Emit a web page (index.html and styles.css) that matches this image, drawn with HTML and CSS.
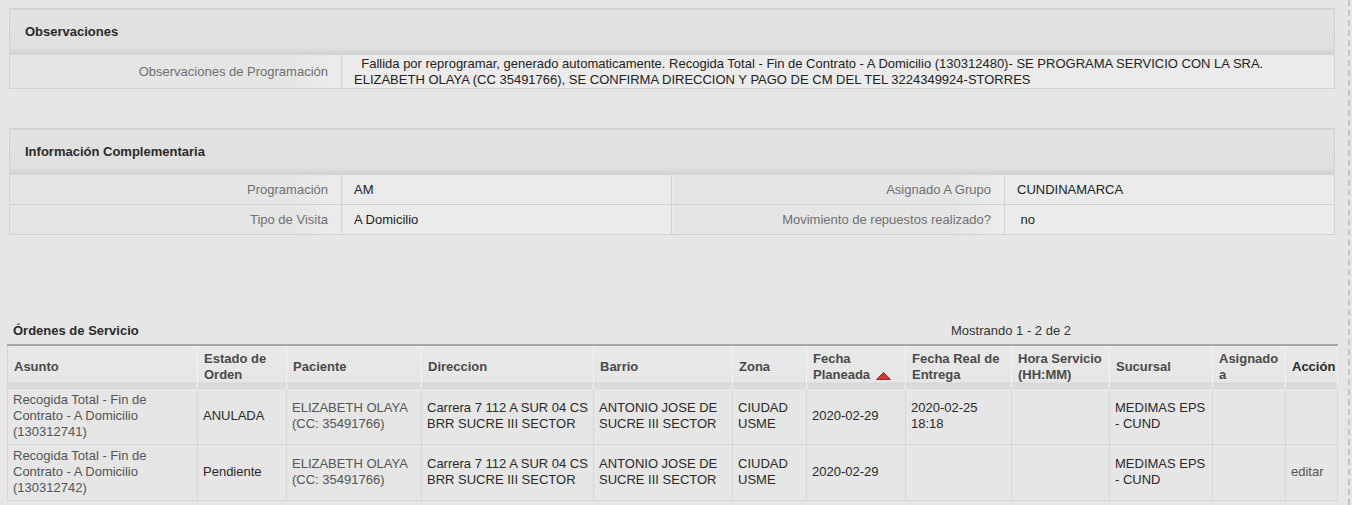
FILE: index.html
```html
<!DOCTYPE html>
<html>

<head>
  <meta charset="utf-8">
  <title>Detalle de Programación</title>
  <link rel="stylesheet" href="styles.css">
</head>

<body>
  <div class="page">

    <!-- Observaciones -->
    <table class="panel panel-obs">
      <colgroup>
        <col style="width: 332px">
        <col>
      </colgroup>
      <tr>
        <th class="panel-title" colspan="2">Observaciones</th>
      </tr>
      <tr>
        <td class="label">Observaciones de Programación</td>
        <td class="value">&nbsp;&nbsp;Fallida por reprogramar, generado automaticamente. Recogida Total - Fin de Contrato - A Domicilio (130312480)- SE PROGRAMA SERVICIO CON LA SRA. ELIZABETH OLAYA (CC 35491766), SE CONFIRMA DIRECCION Y PAGO DE CM DEL TEL 3224349924-STORRES</td>
      </tr>
    </table>

    <!-- Informacion complementaria -->
    <table class="panel panel-info">
      <colgroup>
        <col style="width: 332px">
        <col style="width: 330px">
        <col style="width: 333px">
        <col>
      </colgroup>
      <tr>
        <th class="panel-title" colspan="4">Información Complementaria</th>
      </tr>
      <tr>
        <td class="label">Programación</td>
        <td class="value">AM</td>
        <td class="label">Asignado A Grupo</td>
        <td class="value">CUNDINAMARCA</td>
      </tr>
      <tr>
        <td class="label">Tipo de Visita</td>
        <td class="value">A Domicilio</td>
        <td class="label">Movimiento de repuestos realizado?</td>
        <td class="value">&nbsp;no</td>
      </tr>
    </table>

    <!-- Ordenes de servicio -->
    <div class="list-head">
      <span class="list-title">Órdenes de Servicio</span>
      <span class="list-count">Mostrando 1 - 2 de 2</span>
    </div>
    <table class="grid">
      <colgroup>
        <col style="width: 190px">
        <col style="width: 89px">
        <col style="width: 135px">
        <col style="width: 172px">
        <col style="width: 139px">
        <col style="width: 74px">
        <col style="width: 99px">
        <col style="width: 106px">
        <col style="width: 98px">
        <col style="width: 103px">
        <col style="width: 73px">
        <col style="width: 52px">
      </colgroup>
      <thead>
        <tr>
          <th>Asunto</th>
          <th>Estado de Orden</th>
          <th>Paciente</th>
          <th>Direccion</th>
          <th>Barrio</th>
          <th>Zona</th>
          <th>Fecha Planeada <svg class="sort" width="15" height="8" viewBox="0 0 15 8"><polygon points="7.5,0.5 14.5,7.5 0.5,7.5" fill="#d23a3a" stroke="#9e2a2a" stroke-width="1"/></svg></th>
          <th>Fecha Real de Entrega</th>
          <th>Hora Servicio (HH:MM)</th>
          <th>Sucursal</th>
          <th>Asignado a</th>
          <th class="dark">Acción</th>
        </tr>
      </thead>
      <tbody>
        <tr>
          <td><a href="#">Recogida Total - Fin de Contrato - A Domicilio (130312741)</a></td>
          <td>ANULADA</td>
          <td><a href="#">ELIZABETH OLAYA (CC: 35491766)</a></td>
          <td>Carrera 7 112 A SUR 04 CS BRR SUCRE III SECTOR</td>
          <td>ANTONIO JOSE DE SUCRE III SECTOR</td>
          <td>CIUDAD USME</td>
          <td>2020-02-29</td>
          <td>2020-02-25 18:18</td>
          <td></td>
          <td>MEDIMAS EPS - CUND</td>
          <td></td>
          <td></td>
        </tr>
        <tr>
          <td><a href="#">Recogida Total - Fin de Contrato - A Domicilio (130312742)</a></td>
          <td>Pendiente</td>
          <td><a href="#">ELIZABETH OLAYA (CC: 35491766)</a></td>
          <td>Carrera 7 112 A SUR 04 CS BRR SUCRE III SECTOR</td>
          <td>ANTONIO JOSE DE SUCRE III SECTOR</td>
          <td>CIUDAD USME</td>
          <td>2020-02-29</td>
          <td></td>
          <td></td>
          <td>MEDIMAS EPS - CUND</td>
          <td></td>
          <td><a href="#">editar</a></td>
        </tr>
      </tbody>
    </table>

  </div>
</body>

</html>
```

FILE: styles.css
```css
html,
body {
  margin: 0;
  padding: 0;
  background-color: #e6e6e6;
}

body {
  font-family: 'Liberation Sans', Arial, sans-serif;
  font-size: 13px;
  line-height: 16px;
  color: #222;
}

.page {
  width: 1350px;
  min-height: 505px;
  box-sizing: border-box;
  padding-top: 8px;
  border-right: 2px dashed #c4c4c4;
}

/* Panels with the grey title bar */
.panel {
  width: 1326px;
  margin-left: 9px;
  border-collapse: collapse;
  table-layout: fixed;
  border: 1px solid #d0d0d0;
}

.panel-info {
  margin-top: 39px;
}

.panel-title {
  height: 45px;
  padding: 0 0 0 15px;
  text-align: left;
  font-weight: bold;
  color: #2a2a2a;
  background: linear-gradient(to bottom, #e2e2e2 0%, #dfdfdf 86%, #cfcfcf 100%);
  border-bottom: 1px solid #d6d6d6;
}

.panel td {
  border: 1px solid #d3d3d3;
}

.label {
  text-align: right;
  color: #707070;
  padding: 0 13px 0 0;
  background: linear-gradient(to right, #e5e5e5 85%, #ececec 100%);
}

.value {
  padding: 0 12px;
  background-color: #ebebeb;
}

.panel-obs .label {
  height: 32px;
  padding-top: 1px;
}

.panel-obs .value {
  vertical-align: top;
  padding-top: 1px;
}

.panel-info td {
  height: 29px;
}

/* Ordenes de servicio */
.list-head {
  display: grid;
  grid-template-columns: 1fr 652px;
  width: 1330px;
  margin: 88px 0 0 7px;
  padding: 0 0 5px 6px;
  box-sizing: border-box;
}

.list-title {
  font-weight: bold;
  color: #2a2a2a;
}

.list-count {
  text-align: center;
  color: #333;
}

.grid {
  width: 1330px;
  margin-left: 7px;
  border-collapse: collapse;
  table-layout: fixed;
  border-top: 2px solid #a8a8a8;
  border-bottom: 1px solid #d8d8d8;
}

.grid th {
  height: 43px;
  padding: 1px 5px 0 6px;
  box-sizing: border-box;
  text-align: left;
  font-weight: bold;
  color: #4a4a4a;
  background: linear-gradient(to bottom, #e8e8e8 0%, #e6e6e6 86%, #d6d6d6 88%, #dedede 100%);
  border-left: 1px solid #d4d4d4;
  border-right: 1px solid #f1f1f1;
}

.grid th.dark {
  color: #2a2a2a;
}

.sort {
  vertical-align: -1px;
  margin-left: 2px;
}

.grid td {
  height: 56px;
  padding: 3px 5px;
  box-sizing: border-box;
  vertical-align: middle;
  color: #2a2a2a;
  border: 1px solid #d6d6d6;
}

.grid a {
  color: #555;
  text-decoration: none;
}
```
